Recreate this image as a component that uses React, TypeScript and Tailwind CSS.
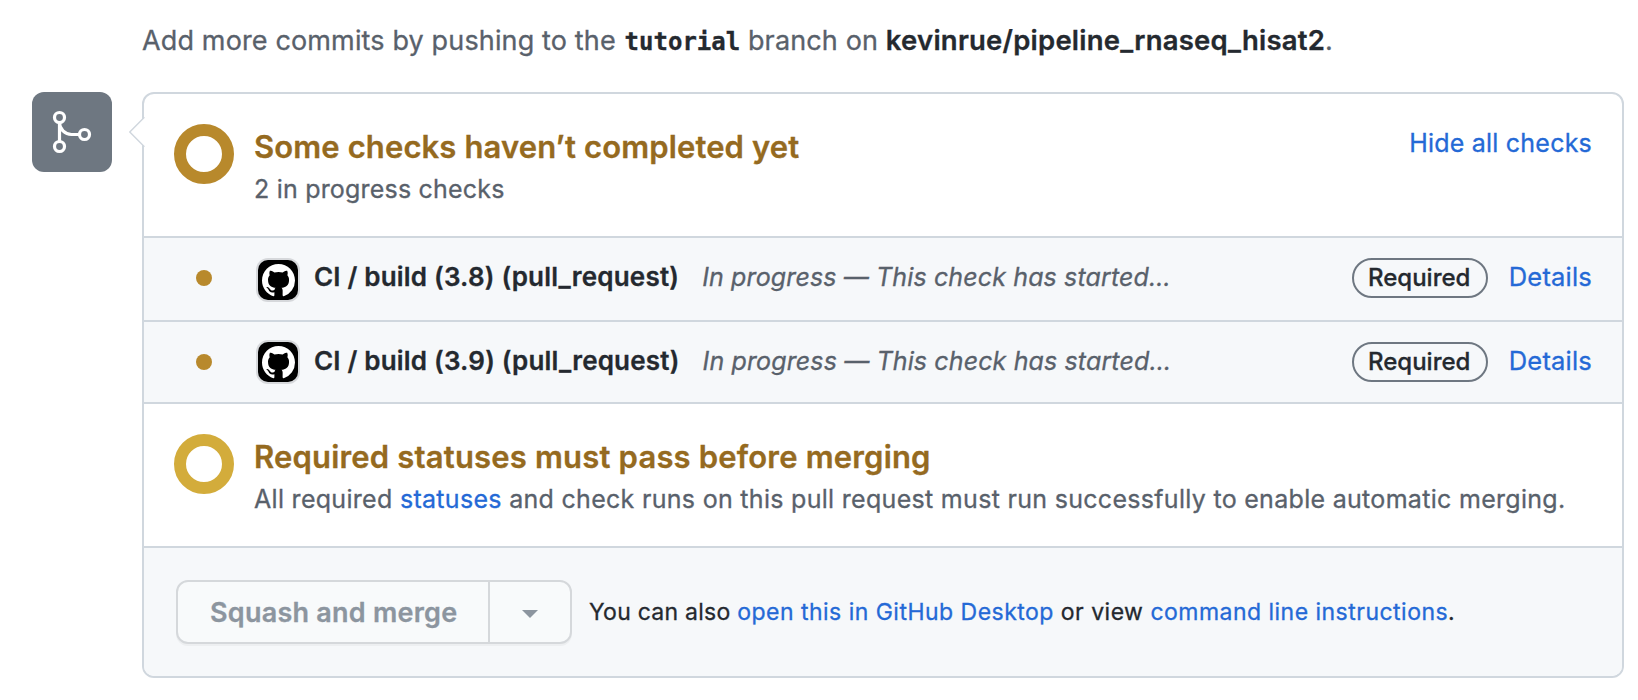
import type { ReactNode } from "react";

function MergeIcon() {
  return (
    <svg viewBox="0 0 24 24" className="size-12" fill="none" stroke="#ffffff" strokeWidth="1.6">
      <circle cx="5.75" cy="4.75" r="2.5" />
      <circle cx="5.75" cy="19.25" r="2.5" />
      <circle cx="18.25" cy="13.25" r="2.5" />
      <path d="M5.75 7.25v9.5M5.75 7.25a6 6 0 0 0 6 6h4" />
    </svg>
  );
}

function ActionsAvatar({ className }: { className: string }) {
  return (
    <span
      className={`flex size-10 shrink-0 items-center justify-center rounded-[10px] bg-black shadow-[0_0_0_2px_#d6d8db] ${className}`}
    >
      <svg viewBox="0 0 16 16" className="size-[33px]" fill="#ffffff">
        <path d="M8 0C3.58 0 0 3.58 0 8c0 3.54 2.29 6.53 5.47 7.59.4.07.55-.17.55-.38 0-.19-.01-.82-.01-1.49-2.01.37-2.53-.49-2.69-.94-.09-.23-.48-.94-.82-1.13-.28-.15-.68-.52-.01-.53.63-.01 1.08.58 1.23.82.72 1.21 1.87.87 2.33.66.07-.52.28-.87.51-1.07-1.78-.2-3.64-.89-3.64-3.95 0-.87.31-1.59.82-2.15-.08-.2-.36-1.02.08-2.12 0 0 .67-.21 2.2.82.64-.18 1.32-.27 2-.27s1.36.09 2 .27c1.53-1.04 2.2-.82 2.2-.82.44 1.1.16 1.92.08 2.12.51.56.82 1.27.82 2.15 0 3.07-1.87 3.75-3.65 3.95.29.25.54.73.54 1.48 0 1.07-.01 1.93-.01 2.2 0 .21.15.46.55.38A8.01 8.01 0 0 0 16 8c0-4.42-3.58-8-8-8z" />
      </svg>
    </span>
  );
}

function Link({ children }: { children: ReactNode }) {
  return <a className="text-[#2469d6]">{children}</a>;
}

function StatusSection({
  ring,
  title,
  titleTracking,
  textTracking,
  action,
  children,
}: {
  ring: string;
  title: string;
  titleTracking: string;
  textTracking: string;
  action?: ReactNode;
  children: ReactNode;
}) {
  return (
    <section className="flex h-[142px] items-start pt-[30px] pr-[30px] pl-[30px]">
      <span className={`size-[60px] shrink-0 rounded-full border-[12px] ${ring}`} />
      <div className="mt-[3px] ml-5 flex-1 whitespace-nowrap">
        <h3 className={`text-[31px] leading-10 font-semibold text-[#956a20] ${titleTracking}`}>{title}</h3>
        <p className={`mt-0.5 text-[25px] leading-10 text-[#59616b] ${textTracking}`}>{children}</p>
      </div>
      {action}
    </section>
  );
}

function CheckRow({ name, className, avatar }: { name: string; className: string; avatar: string }) {
  return (
    <li className={`border-t-2 border-[#d0d7de] bg-[#f6f8fa] ${className}`}>
      <div className="flex h-20 items-center pr-[30px] pl-[52px] whitespace-nowrap">
        <span className="size-4 shrink-0 rounded-full bg-[#b8892c]" />
        <ActionsAvatar className={`ml-[46px] ${avatar}`} />
        <strong className="ml-4 pb-[3px] text-[26px] leading-10 font-semibold tracking-[0.2px] text-[#24292f]">
          {name}
        </strong>
        <em className="ml-[23px] pb-0.5 text-[25px] leading-10 tracking-[0.13px] text-[#59616b]">
          In progress — This check has started…
        </em>
        <span className="ml-auto h-10 w-[136px] rounded-full border-2 border-[#6e7781] pr-px text-center text-[24px] leading-[35px] font-medium text-[#24292f]">
          Required
        </span>
        <span className="ml-[21px] pb-0.5 text-[25.5px] leading-10 tracking-[0.2px]">
          <Link>Details</Link>
        </span>
      </div>
    </li>
  );
}

export default function App() {
  return (
    <main className="h-[700px] w-[1638px] overflow-hidden bg-white pt-[21px] font-['Inter','Noto_Sans',sans-serif] [-webkit-text-stroke:0.3px]">
      <p className="h-[71px] pl-[142px] text-[27px] leading-10 tracking-[0.14px] whitespace-nowrap text-[#59616b]">
        Add more commits by pushing to the{" "}
        <code className="ml-px font-['DejaVu_Sans_Mono',monospace] text-[24px] leading-none font-bold tracking-normal text-[#24292f]">
          tutorial
        </code>{" "}
        branch on{" "}
        <strong className="text-[27.5px] leading-none font-semibold tracking-[0.22px] text-[#24292f]">
          kevinrue/pipeline_rnaseq_hisat2
        </strong>
        .
      </p>

      <div className="flex items-start pl-8">
        <span className="flex size-20 shrink-0 items-center justify-center rounded-xl bg-[#6e7781]">
          <MergeIcon />
        </span>

        <div className="relative ml-[30px] h-[586px] w-[1482px] rounded-xl border-2 border-[#d0d7de] bg-white">
          <svg viewBox="0 0 17 32" className="absolute top-[22px] -left-[15px] h-8 w-[17px]" fill="none">
            <path d="M17 1.5H15.4L0.5 16L15.4 30.5H17z" fill="#ffffff" />
            <path d="M15.4 1.3L0.8 16L15.4 30.7" stroke="#d0d7de" strokeWidth="1.4" />
          </svg>

          <StatusSection
            ring="border-[#b8892c]"
            title="Some checks haven’t completed yet"
            titleTracking="tracking-[0.12px]"
            textTracking="tracking-[0.2px]"
            action={
              <span className="-mt-px text-[25px] leading-10 tracking-[0.22px] whitespace-nowrap">
                <Link>Hide all checks</Link>
              </span>
            }
          >
            2 in progress checks
          </StatusSection>

          <ul>
            <CheckRow name="CI / build (3.8) (pull_request)" className="h-[84px]" avatar="mt-1" />
            <CheckRow name="CI / build (3.9) (pull_request)" className="h-[82px]" avatar="mt-0" />
          </ul>

          <div className="border-t-2 border-[#d0d7de]">
            <StatusSection
              ring="border-[#d3ac3b]"
              title="Required statuses must pass before merging"
              titleTracking="tracking-[0.18px]"
              textTracking="tracking-[0.3px]"
            >
              All required <Link>statuses</Link> and check runs on this pull request must run successfully to enable
              automatic merging.
            </StatusSection>
          </div>

          <footer className="flex h-[130px] items-center rounded-b-[10px] border-t-2 border-[#d0d7de] bg-[#f6f8fa] pl-8 whitespace-nowrap">
            <div className="flex h-16 w-[396px] shrink-0 rounded-xl border-2 border-[#d5d8db] bg-[#f8fafb] shadow-[0_2px_0_rgba(27,31,36,0.04)]">
              <button className="w-[312px] border-r-2 border-[#d5d8db] pt-px pl-8 text-left text-[27px] leading-[59px] font-semibold tracking-[0.24px] text-[#8c959f]">
                Squash and merge
              </button>
              <button className="flex flex-1 items-center justify-center">
                <svg viewBox="0 0 16 8" className="mt-1 h-2 w-4" fill="#8c959f">
                  <path d="M0 0h16L8 8z" />
                </svg>
              </button>
            </div>
            <p className="ml-[17px] pb-px text-[23px] leading-10 tracking-[0.48px] text-[#24292f]">
              <span className="tracking-[0.25px]">You can also </span>
              <Link>open this in GitHub Desktop</Link> or view <Link>command line instructions</Link>.
            </p>
          </footer>
        </div>
      </div>
    </main>
  );
}
